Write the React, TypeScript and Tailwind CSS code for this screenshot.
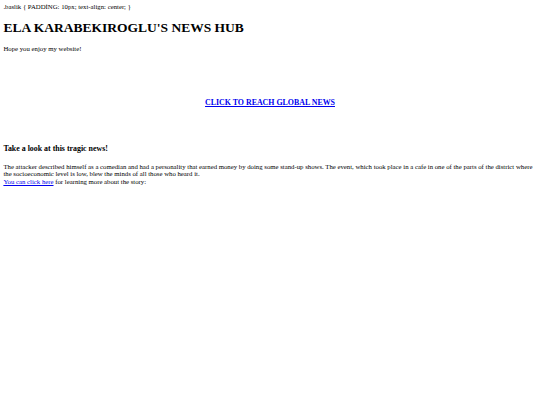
export default function App() {
  return (
    <div className="min-h-screen bg-white p-[3.4px] font-['Liberation_Serif',serif] text-[6.75px] leading-[1.15] text-black">
      <div>.baslik {'{'} PADDİNG: 10px; text-align: center; {'}'}</div>
      <h1 className="my-[9px] text-[13.5px] font-bold leading-[1.15]">ELA KARABEKIROGLU'S NEWS HUB</h1>
      <p className="my-[6.75px]">Hope you enjoy my website!</p>

      <h3 className="mt-[46px] mb-[7.9px] text-center text-[7.9px] font-bold leading-[1.15]">
        <a href="#" className="text-[#0000ee] underline">CLICK TO REACH GLOBAL NEWS</a>
      </h3>

      <h3 className="mt-[37px] mb-[9px] text-[7.9px] font-bold leading-[1.15]">Take a look at this tragic news!</h3>
      <p className="my-[6.75px]">
        The attacker described himself as a comedian and had a personality that earned money by doing some stand-up shows. The event, which took place in a cafe in one of the parts of the district where the socioeconomic level is low, blew the minds of all those who heard it.
        <br />
        <a href="#" className="text-[#0000ee] underline">You can click here</a> for learning more about the story:
      </p>
    </div>
  )
}
